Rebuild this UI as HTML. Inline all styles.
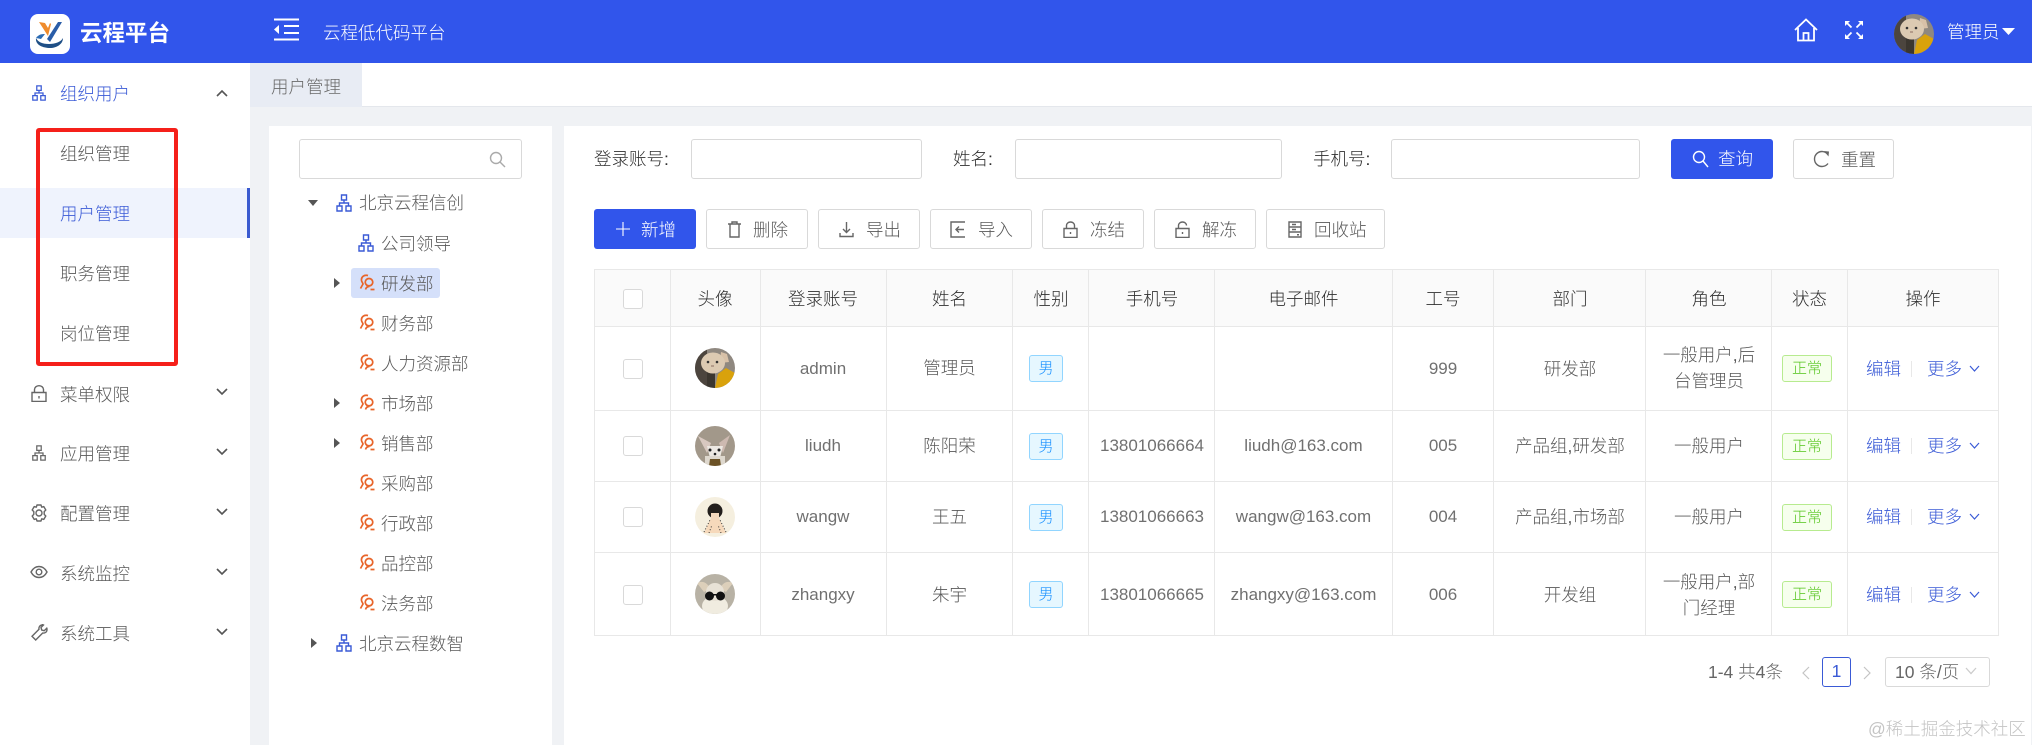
<!DOCTYPE html>
<html lang="zh-CN"><head><meta charset="utf-8"><title>云程平台</title>
<style>
html,body{margin:0;padding:0}
body{width:2032px;height:745px;overflow:hidden;position:relative;background:#f0f2f5;font-family:"Liberation Sans","Noto Sans CJK SC",sans-serif;font-size:17.5px;color:#595959;font-weight:300}
div,span,svg{position:absolute;box-sizing:border-box}
.t{white-space:nowrap;line-height:24px;height:24px}
.c{text-align:center}
.l{font-size:17px;color:#707070}
.b{border:1px solid #d9d9d9;border-radius:3px;background:#fff}
.h{color:#2f2f2f}
.hl{background:#e8e8e8;height:1px;left:594px;width:1405px}
.vl{background:#e8e8e8;width:1px;top:269px;height:367px}
.cb{left:623px;width:20px;height:20px;border:1px solid #d9d9d9;border-radius:3px;background:#fff}
.m{left:1029px;width:34px;height:27px;background:#e6f7ff;border:1px solid #91d5ff;border-radius:3px;color:#1890ff;font-size:15px;line-height:25px;text-align:center}
.n{left:1782px;width:50px;height:27px;background:#f6ffed;border:1px solid #b7eb8f;border-radius:3px;color:#52c41a;font-size:15px;line-height:25px;text-align:center}
.lk{color:#3a5ad6}
.ic{fill:none;stroke:currentColor;stroke-width:1.4}
</style></head><body>
<svg width="0" height="0" style="left:0;top:0">
<defs>
<symbol id="org" viewBox="0 0 16 18"><path class="ic" d="M5.500 1h5v5h-5zM1 12h5v5H1zM10 12h5v5h-5zM8 6v3M3.500 12V9h9v3"/></symbol>
<symbol id="dep" viewBox="0 0 16 18"><path fill="none" stroke="#e8652a" stroke-width="1.700" d="M9 1.500C5 .5 2 3 2.500 6.500c.2 1.500 1.200 2.200 1.500 3.500L1.500 14.500M6.500 15.500c.5-2 2-3 4-3M10 4.500a3.700 3.700 0 1 0 .01 0M11.500 15.500h4"/></symbol>
<symbol id="dn" viewBox="0 0 14 10"><path fill="none" stroke="#555" stroke-width="1.600" d="M2 2l5 5 5-5"/></symbol>
<clipPath id="cp"><circle cx="20" cy="20" r="20"/></clipPath>
<symbol id="cat" viewBox="0 0 40 40"><g clip-path="url(#cp)"><rect width="40" height="40" fill="#8f8880"/><rect width="12" height="40" fill="#4c453e"/><rect x="12" y="22" width="8" height="18" fill="#3b362f"/><path d="M20 40l3-14 8-6 9 5v15z" fill="#d9a20c"/><path d="M26 4l6 2 2 8-9 1z" fill="#d8c1a8"/><ellipse cx="18" cy="15" rx="12" ry="10.500" fill="#dccab2"/><circle cx="13" cy="14" r="1.300" fill="#333"/><circle cx="22" cy="14" r="1.300" fill="#333"/><path d="M16 18h3" stroke="#8d6e63"/></g></symbol>
<symbol id="fox" viewBox="0 0 40 40"><g clip-path="url(#cp)"><rect width="40" height="40" fill="#a2988a"/><path d="M3 10l13 7-4 10z" fill="#d8c8c0"/><path d="M35 9L24 17l4 10z" fill="#cdb9b0"/><path d="M12 20h16l-3 12-5 3-5-3z" fill="#ece8e2"/><path d="M10 30h20v10H10z" fill="#ded8ce"/><path d="M15 33h10l1 7H14z" fill="#6b5226"/><circle cx="15" cy="24" r="1.500" fill="#222"/><circle cx="24" cy="24" r="1.500" fill="#222"/><circle cx="20" cy="28" r="1.300" fill="#222"/></g></symbol>
<symbol id="per" viewBox="0 0 40 40"><g clip-path="url(#cp)"><rect width="40" height="40" fill="#f5efdf"/><path d="M9 36l7-15h8l7 15z" fill="#f6d9bb"/><circle cx="20" cy="14" r="7.500" fill="#231f1c"/><rect x="16" y="16" width="8" height="7" fill="#f3d7bc"/><path d="M9 35l6-12M31 35l-6-12M14 36l3-8M26 36l-3-8" stroke="#333" stroke-width="1" stroke-dasharray="1 2"/></g></symbol>
<symbol id="rab" viewBox="0 0 40 40"><g clip-path="url(#cp)"><rect width="40" height="40" fill="#b8b2a5"/><path d="M2 9c6-3 11 0 13 6l-6 3zM38 9c-6-3-11 0-13 6l6 3z" fill="#dccfba"/><ellipse cx="20" cy="32" rx="13" ry="10" fill="#f0ece0"/><circle cx="20" cy="18" r="9" fill="#e8e2d6"/><circle cx="14.500" cy="22" r="4.500" fill="#111"/><circle cx="25.500" cy="22" r="4.500" fill="#111"/><rect x="12" y="20" width="16" height="1.500" fill="#111"/></g></symbol>
</defs></svg>

<!-- header -->
<div style="left:0;top:0;width:2032px;height:63px;background:#3155eb"></div>
<svg style="left:30px;top:14px" width="40" height="40" viewBox="0 0 40 40"><rect width="40" height="40" rx="8" fill="#fff"/><path d="M9 8l6 1 3 5 2-5 1 1-3 12z" fill="#ef8b2c"/><path d="M17 25L28 8h4L20 28z" fill="#2a5da8"/><path d="M6 24c-1 7 7 10 14 10s13-4 13-10c-2 4-8 6-14 6-7 0-11-2-13-6z" fill="#1f4f86"/><path d="M6 24c3-4 6-4 9-4l-4 5z" fill="#2c6cb4"/></svg>
<span class="t" style="left:80px;top:22px;font-size:22.500px;font-weight:700;color:#fff">云程平台</span>
<svg style="left:274px;top:18px" width="25" height="23" viewBox="0 0 25 23"><path d="M0 1.500h25M10 8h15M10 15h15M0 21.500h25" stroke="#fff" stroke-width="2"/><path d="M0 11.500l5-4.500v9z" fill="#fff"/></svg>
<span class="t" style="left:323px;top:21px;color:#fff">云程低代码平台</span>
<svg style="left:1794px;top:18px" width="24" height="24" viewBox="0 0 24 24"><path d="M1 12L12 1.500 23 12M4 10v12.500h16V10M9.500 22v-7h5v7" fill="none" stroke="#fff" stroke-width="1.800"/></svg>
<svg style="left:1845px;top:21px" width="18" height="18" viewBox="0 0 18 18"><g fill="#fff"><path d="M0 0h5L0 5zM18 0h-5l5 5zM0 18h5l-5-5zM18 18h-5l5-5z"/></g><path d="M2 2l4.500 4.500M16 2l-4.500 4.500M2 16l4.500-4.500M16 16l-4.500-4.500" stroke="#fff" stroke-width="1.800"/></svg>
<svg style="left:1894px;top:14px" width="40" height="40"><use href="#cat"/></svg>
<span class="t" style="left:1947px;top:20px;color:#fff">管理员</span>
<svg style="left:2002px;top:28px" width="13" height="7"><path d="M0 0h13L6.500 7z" fill="#fff"/></svg>

<!-- sidebar -->
<div style="left:0;top:63px;width:250px;height:682px;background:#fff"></div>
<div style="left:0;top:188px;width:250px;height:50px;background:#eff3fd"></div>
<div style="left:247px;top:188px;width:3px;height:50px;background:#3a5ad0"></div>
<svg style="left:31px;top:85px;color:#3a5ad6" width="16" height="16"><use href="#org"/></svg>
<span class="t" style="left:60px;top:82px;color:#3a5ad6">组织用户</span>
<svg style="left:215px;top:88px;transform:rotate(180deg)" width="14" height="10"><use href="#dn"/></svg>
<span class="t" style="left:60px;top:142px">组织管理</span>
<span class="t" style="left:60px;top:202px;color:#3a5ad6">用户管理</span>
<span class="t" style="left:60px;top:262px">职务管理</span>
<span class="t" style="left:60px;top:322px">岗位管理</span>
<div style="left:36px;top:128px;width:142px;height:238px;border:4px solid #f5201a;border-radius:3px"></div>

<svg style="left:31px;top:385px;color:#666" width="16" height="17" viewBox="0 0 16 17"><path class="ic" d="M1 7.500h14v9H1zM3.500 7V4.500a4.500 3.800 0 0 1 9 0V7M8 11v2.500"/></svg>
<span class="t" style="left:60px;top:383px">菜单权限</span>
<svg style="left:215px;top:387px" width="14" height="10"><use href="#dn"/></svg>
<svg style="left:31px;top:445px;color:#666" width="16" height="16"><use href="#org"/></svg>
<span class="t" style="left:60px;top:442px">应用管理</span>
<svg style="left:215px;top:447px" width="14" height="10"><use href="#dn"/></svg>
<svg style="left:30px;top:504px;color:#666" width="18" height="18" viewBox="0 0 18 18"><path class="ic" stroke-linejoin="round" d="M7 1h4l.7 2.200 2.100-.6 2 3.400-1.600 1.600v2.800l1.600 1.600-2 3.400-2.100-.6L11 17H7l-.7-2.200-2.100.6-2-3.400 1.600-1.600V7.600L2.200 6l2-3.400 2.100.6z"/><circle class="ic" cx="9" cy="9" r="3"/></svg>
<span class="t" style="left:60px;top:502px">配置管理</span>
<svg style="left:215px;top:507px" width="14" height="10"><use href="#dn"/></svg>
<svg style="left:30px;top:565px;color:#666" width="18" height="14" viewBox="0 0 18 14"><path class="ic" d="M1 7c2-3.800 5-5.500 8-5.500S15 3.200 17 7c-2 3.800-5 5.500-8 5.500S3 10.800 1 7z"/><circle class="ic" cx="9" cy="7" r="2.800"/></svg>
<span class="t" style="left:60px;top:562px">系统监控</span>
<svg style="left:215px;top:567px" width="14" height="10"><use href="#dn"/></svg>
<svg style="left:31px;top:624px;color:#666" width="17" height="17" viewBox="0 0 17 17"><path class="ic" d="M11.500 1c-2.500 0-4 2-3.500 4.300L1 12.300 4.700 16l7-7c2.300.5 4.300-1 4.300-3.500 0-.5 0-.9-.2-1.300l-2.600 2.500-2.500-.7-.7-2.500 2.500-2.500c-.3-.2-.6-.3-1-.4z"/></svg>
<span class="t" style="left:60px;top:622px">系统工具</span>
<svg style="left:215px;top:627px" width="14" height="10"><use href="#dn"/></svg>

<!-- tabs -->
<div style="left:250px;top:63px;width:1782px;height:44px;background:#fff;border-bottom:1px solid #e4e7ec"></div>
<div style="left:250px;top:63px;width:112px;height:44px;background:#e8ecf4"></div>
<span class="t" style="left:271px;top:75px;color:#6a6a6a">用户管理</span>

<!-- tree -->
<div style="left:269px;top:126px;width:283px;height:619px;background:#fff"></div>
<div class="b" style="left:299px;top:139px;width:223px;height:40px"></div>
<svg style="left:489px;top:151px;color:#aaa" width="17" height="17" viewBox="0 0 17 17"><circle class="ic" cx="7" cy="7" r="5.500"/><path class="ic" d="M11 11l5 5"/></svg>
<div style="left:351px;top:268px;width:89px;height:30px;background:#d5e0fa;border-radius:3px"></div>
<svg style="left:308px;top:200px" width="10" height="7"><path d="M0 0h10L5 6z" fill="#555"/></svg>
<svg style="left:336px;top:194px;color:#3a5ad6" width="16" height="18"><use href="#org"/></svg>
<span class="t" style="left:359px;top:191px">北京云程信创</span>
<svg style="left:358px;top:234px;color:#3a5ad6" width="16" height="18"><use href="#org"/></svg>
<span class="t" style="left:381px;top:232px">公司领导</span>
<svg style="left:334px;top:278px" width="7" height="10"><path d="M0 0v10l6-5z" fill="#555"/></svg>
<svg style="left:359px;top:274px" width="16" height="18"><use href="#dep"/></svg>
<span class="t" style="left:381px;top:272px">研发部</span>
<svg style="left:359px;top:314px" width="16" height="18"><use href="#dep"/></svg>
<span class="t" style="left:381px;top:312px">财务部</span>
<svg style="left:359px;top:354px" width="16" height="18"><use href="#dep"/></svg>
<span class="t" style="left:381px;top:352px">人力资源部</span>
<svg style="left:334px;top:398px" width="7" height="10"><path d="M0 0v10l6-5z" fill="#555"/></svg>
<svg style="left:359px;top:394px" width="16" height="18"><use href="#dep"/></svg>
<span class="t" style="left:381px;top:392px">市场部</span>
<svg style="left:334px;top:438px" width="7" height="10"><path d="M0 0v10l6-5z" fill="#555"/></svg>
<svg style="left:359px;top:434px" width="16" height="18"><use href="#dep"/></svg>
<span class="t" style="left:381px;top:432px">销售部</span>
<svg style="left:359px;top:474px" width="16" height="18"><use href="#dep"/></svg>
<span class="t" style="left:381px;top:472px">采购部</span>
<svg style="left:359px;top:514px" width="16" height="18"><use href="#dep"/></svg>
<span class="t" style="left:381px;top:512px">行政部</span>
<svg style="left:359px;top:554px" width="16" height="18"><use href="#dep"/></svg>
<span class="t" style="left:381px;top:552px">品控部</span>
<svg style="left:359px;top:594px" width="16" height="18"><use href="#dep"/></svg>
<span class="t" style="left:381px;top:592px">法务部</span>
<svg style="left:311px;top:638px" width="7" height="10"><path d="M0 0v10l6-5z" fill="#555"/></svg>
<svg style="left:336px;top:634px;color:#3a5ad6" width="16" height="18"><use href="#org"/></svg>
<span class="t" style="left:359px;top:632px">北京云程数智</span>

<!-- main panel -->
<div style="left:564px;top:126px;width:1467px;height:619px;background:#fff"></div>
<span class="t h" style="left:594px;top:147px">登录账号:</span>
<div class="b" style="left:691px;top:139px;width:231px;height:40px"></div>
<span class="t h" style="left:953px;top:147px">姓名:</span>
<div class="b" style="left:1015px;top:139px;width:267px;height:40px"></div>
<span class="t h" style="left:1313px;top:147px">手机号:</span>
<div class="b" style="left:1391px;top:139px;width:249px;height:40px"></div>
<div style="left:1671px;top:139px;width:102px;height:40px;background:#3155eb;border-radius:3px"></div>
<svg style="left:1692px;top:150px;color:#fff" width="17" height="18" viewBox="0 0 17 18"><circle class="ic" cx="7" cy="7" r="5.500"/><path class="ic" d="M11 11l5 6"/></svg>
<span class="t" style="left:1718px;top:147px;color:#fff">查询</span>
<div class="b" style="left:1793px;top:139px;width:101px;height:40px"></div>
<svg style="left:1813px;top:150px;color:#666" width="17" height="18" viewBox="0 0 17 18"><path class="ic" d="M15 4.500A7.500 7.500 0 1 0 15 13.500"/><path d="M11 1l5 .5-.5 5z" fill="#666"/></svg>
<span class="t" style="left:1841px;top:148px">重置</span>

<div style="left:594px;top:209px;width:102px;height:40px;background:#3155eb;border-radius:3px"></div>
<svg style="left:615px;top:221px" width="16" height="16"><path d="M8 1v14M1 8h14" stroke="#fff" stroke-width="1.100"/></svg>
<span class="t" style="left:641px;top:218px;color:#fff">新增</span>
<div class="b" style="left:706px;top:209px;width:102px;height:40px"></div>
<svg style="left:727px;top:221px;color:#666" width="15" height="17" viewBox="0 0 15 17"><path class="ic" d="M1 3h13M5 3V1h5v2M3 3v13h9V3"/></svg>
<span class="t" style="left:753px;top:218px">删除</span>
<div class="b" style="left:818px;top:209px;width:102px;height:40px"></div>
<svg style="left:839px;top:221px;color:#666" width="15" height="17" viewBox="0 0 15 17"><path class="ic" d="M7.500 1v10M4 8l3.500 3.500L11 8M1 12v3.500h13V12"/></svg>
<span class="t" style="left:866px;top:218px">导出</span>
<div class="b" style="left:930px;top:209px;width:102px;height:40px"></div>
<svg style="left:950px;top:221px;color:#666" width="16" height="17" viewBox="0 0 16 17"><path class="ic" d="M15 1H1v15h14M14 8.500H6M9 5.500l-3 3 3 3"/></svg>
<span class="t" style="left:978px;top:218px">导入</span>
<div class="b" style="left:1042px;top:209px;width:102px;height:40px"></div>
<svg style="left:1063px;top:221px;color:#666" width="15" height="17" viewBox="0 0 15 17"><path class="ic" d="M1 7.500h13v9H1zM3.500 7V4.500a4 3.500 0 0 1 8 0V7M7.500 11v2"/></svg>
<span class="t" style="left:1090px;top:218px">冻结</span>
<div class="b" style="left:1154px;top:209px;width:102px;height:40px"></div>
<svg style="left:1175px;top:221px;color:#666" width="15" height="17" viewBox="0 0 15 17"><path class="ic" d="M1 7.500h13v9H1zM3.500 7V4.500a4 3.500 0 0 1 8 0M7.500 11v2"/></svg>
<span class="t" style="left:1202px;top:218px">解冻</span>
<div class="b" style="left:1266px;top:209px;width:119px;height:40px"></div>
<svg style="left:1288px;top:221px;color:#666" width="14" height="17" viewBox="0 0 14 17"><path class="ic" d="M1 1h12v15H1zM1 6h12M1 11h12M4 3.500h4M4 8.500h4"/><path d="M9 13h2v1.500H9z" fill="#666"/></svg>
<span class="t" style="left:1314px;top:218px">回收站</span>

<!-- table -->
<div style="left:594px;top:269px;width:1405px;height:57px;background:#fafafa"></div>
<div class="hl" style="top:269px"></div><div class="hl" style="top:326px"></div><div class="hl" style="top:410px"></div><div class="hl" style="top:481px"></div><div class="hl" style="top:552px"></div><div class="hl" style="top:635px"></div>
<div class="vl" style="left:594px"></div><div class="vl" style="left:670px"></div><div class="vl" style="left:760px"></div><div class="vl" style="left:886px"></div><div class="vl" style="left:1012px"></div><div class="vl" style="left:1088px"></div><div class="vl" style="left:1214px"></div><div class="vl" style="left:1392px"></div><div class="vl" style="left:1493px"></div><div class="vl" style="left:1645px"></div><div class="vl" style="left:1771px"></div><div class="vl" style="left:1847px"></div><div class="vl" style="left:1998px"></div>

<div class="cb" style="top:289px"></div>
<span class="t c h" style="left:670px;width:90px;top:287px">头像</span>
<span class="t c h" style="left:760px;width:126px;top:287px">登录账号</span>
<span class="t c h" style="left:886px;width:127px;top:287px">姓名</span>
<span class="t c h" style="left:1013px;width:76px;top:287px">性别</span>
<span class="t c h" style="left:1089px;width:126px;top:287px">手机号</span>
<span class="t c h" style="left:1215px;width:177px;top:287px">电子邮件</span>
<span class="t c h" style="left:1392px;width:102px;top:287px">工号</span>
<span class="t c h" style="left:1494px;width:152px;top:287px">部门</span>
<span class="t c h" style="left:1646px;width:126px;top:287px">角色</span>
<span class="t c h" style="left:1772px;width:75px;top:287px">状态</span>
<span class="t c h" style="left:1847px;width:152px;top:287px">操作</span>

<!-- row1 -->
<div class="cb" style="top:359px"></div>
<svg style="left:695px;top:348px" width="40" height="40"><use href="#cat"/></svg>
<span class="t c l" style="left:760px;width:126px;top:357px">admin</span>
<span class="t c" style="left:886px;width:127px;top:356px">管理员</span>
<div class="m" style="top:355px">男</div>
<span class="t c l" style="left:1392px;width:102px;top:357px">999</span>
<span class="t c" style="left:1494px;width:152px;top:357px">研发部</span>
<span class="t c" style="left:1646px;width:126px;top:343px">一般用户,后</span>
<span class="t c" style="left:1646px;width:126px;top:369px">台管理员</span>
<div class="n" style="top:355px">正常</div>
<span class="t lk" style="left:1866px;top:357px">编辑</span>
<div style="left:1911px;top:361px;width:1px;height:16px;background:#e8e8e8"></div>
<span class="t lk" style="left:1927px;top:357px">更多</span>
<svg style="left:1969px;top:365px" width="11" height="8"><path d="M1 1l4.500 5L10 1" fill="none" stroke="#3a5ad6" stroke-width="1.200"/></svg>

<!-- row2 -->
<div class="cb" style="top:436px"></div>
<svg style="left:695px;top:426px" width="40" height="40"><use href="#fox"/></svg>
<span class="t c l" style="left:760px;width:126px;top:434px">liudh</span>
<span class="t c" style="left:886px;width:127px;top:434px">陈阳荣</span>
<div class="m" style="top:433px">男</div>
<span class="t c l" style="left:1089px;width:126px;top:434px">13801066664</span>
<span class="t c l" style="left:1215px;width:177px;top:434px">liudh@163.com</span>
<span class="t c l" style="left:1392px;width:102px;top:434px">005</span>
<span class="t c" style="left:1494px;width:152px;top:434px">产品组,研发部</span>
<span class="t c" style="left:1646px;width:126px;top:434px">一般用户</span>
<div class="n" style="top:433px">正常</div>
<span class="t lk" style="left:1866px;top:434px">编辑</span>
<div style="left:1911px;top:438px;width:1px;height:16px;background:#e8e8e8"></div>
<span class="t lk" style="left:1927px;top:434px">更多</span>
<svg style="left:1969px;top:442px" width="11" height="8"><path d="M1 1l4.500 5L10 1" fill="none" stroke="#3a5ad6" stroke-width="1.200"/></svg>

<!-- row3 -->
<div class="cb" style="top:507px"></div>
<svg style="left:695px;top:497px" width="40" height="40"><use href="#per"/></svg>
<span class="t c l" style="left:760px;width:126px;top:505px">wangw</span>
<span class="t c" style="left:886px;width:127px;top:505px">王五</span>
<div class="m" style="top:504px">男</div>
<span class="t c l" style="left:1089px;width:126px;top:505px">13801066663</span>
<span class="t c l" style="left:1215px;width:177px;top:505px">wangw@163.com</span>
<span class="t c l" style="left:1392px;width:102px;top:505px">004</span>
<span class="t c" style="left:1494px;width:152px;top:505px">产品组,市场部</span>
<span class="t c" style="left:1646px;width:126px;top:505px">一般用户</span>
<div class="n" style="top:504px">正常</div>
<span class="t lk" style="left:1866px;top:505px">编辑</span>
<div style="left:1911px;top:509px;width:1px;height:16px;background:#e8e8e8"></div>
<span class="t lk" style="left:1927px;top:505px">更多</span>
<svg style="left:1969px;top:513px" width="11" height="8"><path d="M1 1l4.500 5L10 1" fill="none" stroke="#3a5ad6" stroke-width="1.200"/></svg>

<!-- row4 -->
<div class="cb" style="top:585px"></div>
<svg style="left:695px;top:574px" width="40" height="40"><use href="#rab"/></svg>
<span class="t c l" style="left:760px;width:126px;top:583px">zhangxy</span>
<span class="t c" style="left:886px;width:127px;top:583px">朱宇</span>
<div class="m" style="top:581px">男</div>
<span class="t c l" style="left:1089px;width:126px;top:583px">13801066665</span>
<span class="t c l" style="left:1215px;width:177px;top:583px">zhangxy@163.com</span>
<span class="t c l" style="left:1392px;width:102px;top:583px">006</span>
<span class="t c" style="left:1494px;width:152px;top:583px">开发组</span>
<span class="t c" style="left:1646px;width:126px;top:570px">一般用户,部</span>
<span class="t c" style="left:1646px;width:126px;top:596px">门经理</span>
<div class="n" style="top:581px">正常</div>
<span class="t lk" style="left:1866px;top:583px">编辑</span>
<div style="left:1911px;top:587px;width:1px;height:16px;background:#e8e8e8"></div>
<span class="t lk" style="left:1927px;top:583px">更多</span>
<svg style="left:1969px;top:591px" width="11" height="8"><path d="M1 1l4.500 5L10 1" fill="none" stroke="#3a5ad6" stroke-width="1.200"/></svg>

<!-- pagination -->
<span class="t" style="left:1708px;top:660px;color:#666">1-4 共4条</span>
<svg style="left:1801px;top:666px" width="10" height="14"><path d="M8 1L2 7l6 6" fill="none" stroke="#c4c4c4" stroke-width="1.200"/></svg>
<div style="left:1822px;top:657px;width:29px;height:30px;border:1px solid #3a5ad6;border-radius:3px;color:#3a5ad6;text-align:center;line-height:26px">1</div>
<svg style="left:1862px;top:666px" width="10" height="14"><path d="M2 1l6 6-6 6" fill="none" stroke="#c4c4c4" stroke-width="1.200"/></svg>
<div class="b" style="left:1885px;top:657px;width:105px;height:30px"></div>
<span class="t" style="left:1895px;top:660px;color:#666">10 条/页</span>
<svg style="left:1965px;top:667px" width="12" height="8"><path d="M1 1l5 5.500L11 1" fill="none" stroke="#ccc" stroke-width="1.300"/></svg>

<span class="t" style="left:1868px;top:717px;font-size:17.500px;color:#c4c4c4">@稀土掘金技术社区</span>
</body></html>
